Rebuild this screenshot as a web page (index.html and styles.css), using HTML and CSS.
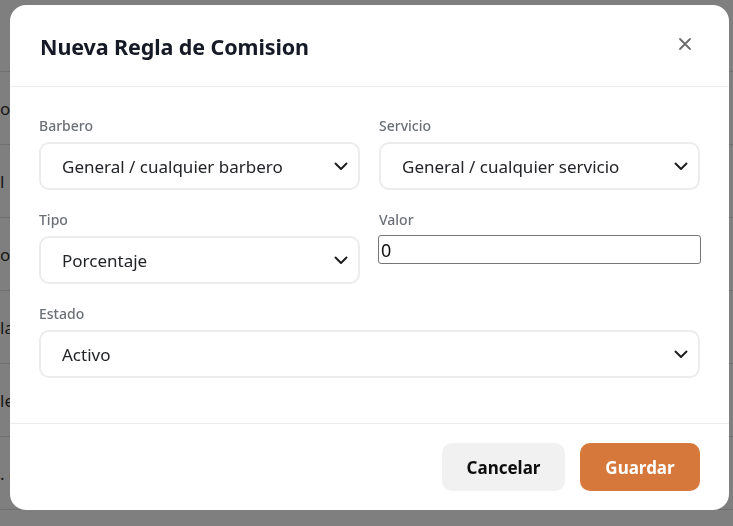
FILE: index.html
```html
<!DOCTYPE html>
<html lang="es">
<head>
<meta charset="utf-8">
<title>Nueva Regla de Comision</title>
<link rel="stylesheet" href="styles.css">
</head>
<body>
<div class="page">
  <div class="page-top"></div>
  <div class="page-row">o</div>
  <div class="page-row">l</div>
  <div class="page-row">o c</div>
  <div class="page-row">la</div>
  <div class="page-row">le</div>
  <div class="page-row">. c</div>
</div>
<div class="overlay">
  <div class="modal">
    <div class="modal-header">
      <h2 class="modal-title">Nueva Regla de Comision</h2>
      <button class="close-btn" aria-label="Cerrar">
        <svg width="14" height="14" viewBox="0 0 14 14"><path d="M2 2L12 12M12 2L2 12" stroke="#6b6b6b" stroke-width="1.8" stroke-linecap="round"/></svg>
      </button>
    </div>
    <div class="modal-body">
      <div class="field">
        <label class="label">Barbero</label>
        <div class="select-wrap">
          <select class="select"><option>General / cualquier barbero</option></select>
          <svg class="chev" width="14" height="9" viewBox="0 0 14 9"><path d="M1.5 1.5L7 7L12.5 1.5" fill="none" stroke="#1f1f1f" stroke-width="2" stroke-linecap="round" stroke-linejoin="round"/></svg>
        </div>
      </div>
      <div class="field">
        <label class="label">Servicio</label>
        <div class="select-wrap">
          <select class="select"><option>General / cualquier servicio</option></select>
          <svg class="chev" width="14" height="9" viewBox="0 0 14 9"><path d="M1.5 1.5L7 7L12.5 1.5" fill="none" stroke="#1f1f1f" stroke-width="2" stroke-linecap="round" stroke-linejoin="round"/></svg>
        </div>
      </div>
      <div class="field">
        <label class="label">Tipo</label>
        <div class="select-wrap">
          <select class="select"><option>Porcentaje</option></select>
          <svg class="chev" width="14" height="9" viewBox="0 0 14 9"><path d="M1.5 1.5L7 7L12.5 1.5" fill="none" stroke="#1f1f1f" stroke-width="2" stroke-linecap="round" stroke-linejoin="round"/></svg>
        </div>
      </div>
      <div class="field">
        <label class="label">Valor</label>
        <input class="input" type="text" value="0">
      </div>
      <div class="field full">
        <label class="label">Estado</label>
        <div class="select-wrap">
          <select class="select"><option>Activo</option></select>
          <svg class="chev" width="14" height="9" viewBox="0 0 14 9"><path d="M1.5 1.5L7 7L12.5 1.5" fill="none" stroke="#1f1f1f" stroke-width="2" stroke-linecap="round" stroke-linejoin="round"/></svg>
        </div>
      </div>
    </div>
    <div class="modal-footer">
      <button class="btn btn-cancel">Cancelar</button>
      <button class="btn btn-save">Guardar</button>
    </div>
  </div>
</div>
</body>
</html>
```

FILE: styles.css
```css
* { box-sizing: border-box; }
html, body { margin: 0; padding: 0; }
body {
  font-family: "Noto Sans", "Open Sans", sans-serif;
  background: #ffffff;
  width: 733px;
  height: 526px;
  overflow: hidden;
}
.page { width: 733px; }
.page-top { height: 72px; border-bottom: 1px solid #dedede; }
.page-row {
  height: 73px;
  border-bottom: 1px solid #dedede;
  display: flex;
  align-items: center;
  font-size: 17px;
  color: #333;
  padding-left: 0;
}
.overlay {
  position: fixed;
  inset: 0;
  background: rgba(0, 0, 0, 0.5);
  padding: 5px 4px 0 10px;
}
.modal {
  width: 719px;
  height: 505px;
  background: #ffffff;
  border-radius: 16px;
  display: flex;
  flex-direction: column;
  overflow: hidden;
}
.modal-header {
  height: 82px;
  padding: 2px 30px 0 30px;
  border-bottom: 1px solid #ececec;
  display: flex;
  align-items: center;
  justify-content: space-between;
}
.modal-title {
  margin: 0;
  font-size: 21.5px;
  font-weight: 700;
  color: #161a26;
  letter-spacing: -0.1px;
}
.close-btn {
  border: 0;
  background: none;
  padding: 0;
  width: 20px;
  height: 20px;
  display: flex;
  align-items: center;
  justify-content: center;
  margin-right: 4px;
  margin-top: -6px;
}
.modal-body {
  flex: 1;
  padding: 29px 29px 0 29px;
  display: grid;
  grid-template-columns: 1fr 1fr;
  column-gap: 19px;
  row-gap: 20px;
  align-content: start;
}
.field { display: flex; flex-direction: column; min-width: 0; }
.field.full { grid-column: 1 / span 2; }
.label {
  font-size: 14px;
  line-height: 20px;
  font-weight: 500;
  color: #6b6f76;
  margin-bottom: 6px;
}
.select-wrap { position: relative; }
.select {
  appearance: none;
  -webkit-appearance: none;
  width: 100%;
  height: 48px;
  border: 2px solid #ececec;
  border-radius: 10px;
  background: #ffffff;
  padding: 0 40px 0 21px;
  font-family: "Noto Sans", "Open Sans", sans-serif;
  font-size: 17px;
  color: #222428;
}
.chev {
  position: absolute;
  right: 12px;
  top: 20px;
  pointer-events: none;
}
.input {
  width: calc(100% + 2px);
  height: 29px;
  border: 1px solid #767676;
  border-radius: 3px;
  padding: 1px 2px;
  font-family: "Noto Sans", "Open Sans", sans-serif;
  font-size: 18px;
  color: #111;
  margin-top: -1px;
  margin-left: -1px;
}
.modal-footer {
  height: 87px;
  border-top: 1px solid #ececec;
  display: flex;
  justify-content: flex-end;
  align-items: flex-start;
  gap: 15px;
  padding: 19px 29px 0 0;
}
.btn {
  height: 48px;
  border: 0;
  border-radius: 10px;
  font-family: "Noto Sans", "Open Sans", sans-serif;
  font-size: 17px;
  font-weight: 700;
}
.btn-cancel {
  width: 123px;
  background: #f1f1f1;
  color: #0d0d0d;
}
.btn-save {
  width: 120px;
  background: #d6783b;
  color: #ffffff;
}
```
